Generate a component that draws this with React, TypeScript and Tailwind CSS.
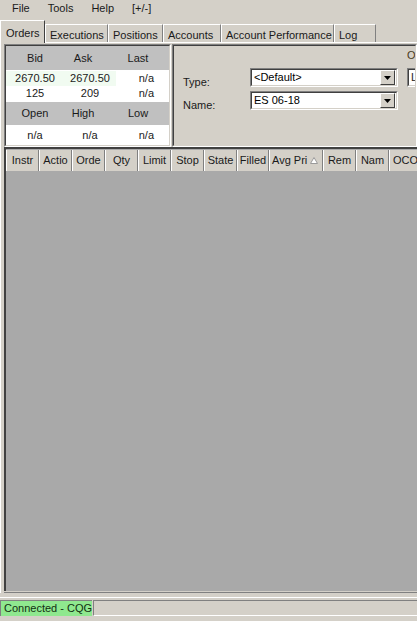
import React from 'react';

// Classic Win32 trading window: order grid with quote box and status bar

const FONT = "font-['Liberation_Sans',Arial,sans-serif]";

const menuItems = ['File', 'Tools', 'Help', '[+/-]'];

const tabs = [
  { label: 'Orders', width: 'w-[45px]', active: true },
  { label: 'Executions', width: 'w-[63px]' },
  { label: 'Positions', width: 'w-[55px]' },
  { label: 'Accounts', width: 'w-[58px]' },
  { label: 'Account Performance', width: 'w-[113px]' },
  { label: 'Log', width: 'w-[42px]' },
];

const columns = [
  { label: 'Instr', width: 'w-[33px]' },
  { label: 'Actio', width: 'w-[33px]' },
  { label: 'Orde', width: 'w-[33px]' },
  { label: 'Qty', width: 'w-[33px]' },
  { label: 'Limit', width: 'w-[33px]' },
  { label: 'Stop', width: 'w-[33px]' },
  { label: 'State', width: 'w-[33px]' },
  { label: 'Filled', width: 'w-[32px]' },
  { label: 'Avg Pri', width: 'w-[54px]', sorted: true },
  { label: 'Rem', width: 'w-[33px]' },
  { label: 'Nam', width: 'w-[33px]' },
  { label: 'OCO', width: 'w-[33px]' },
];

// Sunken 3D frame (outer grey/white, inner dark/face)
function Sunken({ className = '', inner = '', children }: { className?: string; inner?: string; children?: React.ReactNode }) {
  return (
    <div className={`border border-[#808080] border-r-white border-b-white ${className}`}>
      <div className={`h-full border border-[#404040] border-r-[#d4d0c8] border-b-[#d4d0c8] ${inner}`}>{children}</div>
    </div>
  );
}

function ComboBox({ value }: { value: string }) {
  return (
    <Sunken className="w-[148px] h-[19px] shrink-0" inner="bg-white flex items-center">
      <span className="flex-1 pl-[2px] text-black leading-none">{value}</span>
      <div className="w-[15px] h-[15px] mr-[1px] bg-[#d4d0c8] border border-white border-r-[#404040] border-b-[#404040] flex items-center justify-center">
        <svg width="7" height="4" viewBox="0 0 7 4">
          <path d="M0 0H7L3.5 4Z" fill="#000" />
        </svg>
      </div>
    </Sunken>
  );
}

export default function App() {
  return (
    <div className={`${FONT} text-[11px] text-[#1a1a1a] w-[417px] h-[621px] overflow-hidden bg-[#d4d0c8] flex flex-col`}>
      {/* Menu bar */}
      <div className="h-[17px] flex items-center gap-[18px] pl-[12px] leading-none">
        {menuItems.map((m) => (
          <span key={m}>{m}</span>
        ))}
      </div>

      {/* Tab strip */}
      <div className="mt-[3px] h-[22px] flex items-end">
        {tabs.map((t) => (
          <div
            key={t.label}
            className={
              t.active
                ? `${t.width} shrink-0 relative z-10 -mb-[1px] h-[23px] bg-[#d4d0c8] border-t border-l border-white border-r border-r-[#404040] pl-[5px] pt-[4px] whitespace-nowrap`
                : `${t.width} shrink-0 h-[18px] border-t border-l border-white border-r border-r-[#808080] pl-[4px] pt-[2px] whitespace-nowrap overflow-hidden`
            }
          >
            {t.label}
          </div>
        ))}
      </div>

      {/* Tab page */}
      <div className="border-t border-l border-white pt-[1px] pl-[3px] flex flex-col">
        <div className="h-[103px] flex">
          {/* Quote box */}
          <Sunken className="w-[167px] shrink-0 h-[103px]" inner="flex flex-col">
            <div className="h-[24px] bg-[#c0c0c0] flex items-center">
              <span className="w-[58px] text-center">Bid</span>
              <span className="w-[38px] text-center">Ask</span>
              <span className="flex-1 text-center pl-[5px]">Last</span>
            </div>
            <div className="h-[32px] bg-white flex flex-col pt-[1px]">
              <div className="h-[15px] flex items-center">
                <span className="w-[58px] h-full flex items-center justify-center bg-[#f1fbf1]">2670.50</span>
                <span className="w-[52px] h-full flex items-center justify-center bg-[#f1fbf1]">2670.50</span>
                <span className="flex-1 text-right pr-[15px]">n/a</span>
              </div>
              <div className="h-[15px] flex items-center">
                <span className="w-[58px] text-center">125</span>
                <span className="w-[52px] text-center">209</span>
                <span className="flex-1 text-right pr-[15px]">n/a</span>
              </div>
            </div>
            <div className="h-[23px] bg-[#c0c0c0] flex items-center">
              <span className="w-[58px] text-center">Open</span>
              <span className="w-[38px] text-center">High</span>
              <span className="flex-1 text-center pl-[5px]">Low</span>
            </div>
            <div className="flex-1 bg-white flex items-center">
              <span className="w-[58px] text-center">n/a</span>
              <span className="w-[52px] text-center">n/a</span>
              <span className="flex-1 text-right pr-[15px]">n/a</span>
            </div>
          </Sunken>

          {/* Order entry panel */}
          <Sunken className="flex-1 min-w-0 ml-[1px] h-[103px]" inner="flex flex-col overflow-hidden">
            <div className="h-[22px] pl-[233px] pt-[4px] whitespace-nowrap text-[#4a3a20] leading-none">Order</div>
            <div className="flex items-start h-[23px]">
              <span className="w-[76px] shrink-0 pl-[9px] pt-[6px]">Type:</span>
              <ComboBox value="<Default>" />
              <Sunken className="ml-[9px] w-[40px] h-[19px] shrink-0" inner="bg-white pl-[2px] leading-[15px]">
                Li
              </Sunken>
            </div>
            <div className="flex items-start">
              <span className="w-[76px] shrink-0 pl-[9px] pt-[6px]">Name:</span>
              <ComboBox value="ES 06-18" />
            </div>
          </Sunken>
        </div>

        {/* Orders grid */}
        <div className="h-[444px] border-t-2 border-l-2 border-t-[#404040] border-l-[#404040] flex flex-col">
          <div className="h-[22px] flex bg-[#a9a9a9] pt-[1px]">
            {columns.map((c) => (
              <div
                key={c.label}
                className={`${c.width} shrink-0 h-[21px] bg-[#d4d0c8] border-l border-white border-r border-r-[#808080] flex items-center overflow-hidden whitespace-nowrap ${
                  c.sorted ? 'pl-[2px] gap-[3px]' : 'justify-center'
                }`}
              >
                <span>{c.label}</span>
                {c.sorted && (
                  <svg width="8" height="7" viewBox="0 0 8 7">
                    <path d="M4 0.5L7.5 6.5H0.5Z" fill="#ffffff" stroke="#9a9a9a" strokeWidth="1" />
                  </svg>
                )}
              </div>
            ))}
          </div>
          <div className="flex-1 bg-[#a9a9a9]" />
        </div>
        <div className="h-[2px] border-b border-[#808080] bg-[#d4d0c8]" />
      </div>

      {/* Status bar */}
      <div className="mt-[4px] flex-1 border-t border-white pt-[2px] flex items-start">
        <div className="w-[92px] h-[16px] bg-[#8fe88f] border-t border-l border-[#808080] pl-[3px] flex items-center whitespace-nowrap text-[#123012]">
          Connected - CQG
        </div>
        <div className="flex-1 ml-[1px] h-[16px] border-t border-l border-[#808080] border-b border-b-white" />
      </div>
    </div>
  );
}
